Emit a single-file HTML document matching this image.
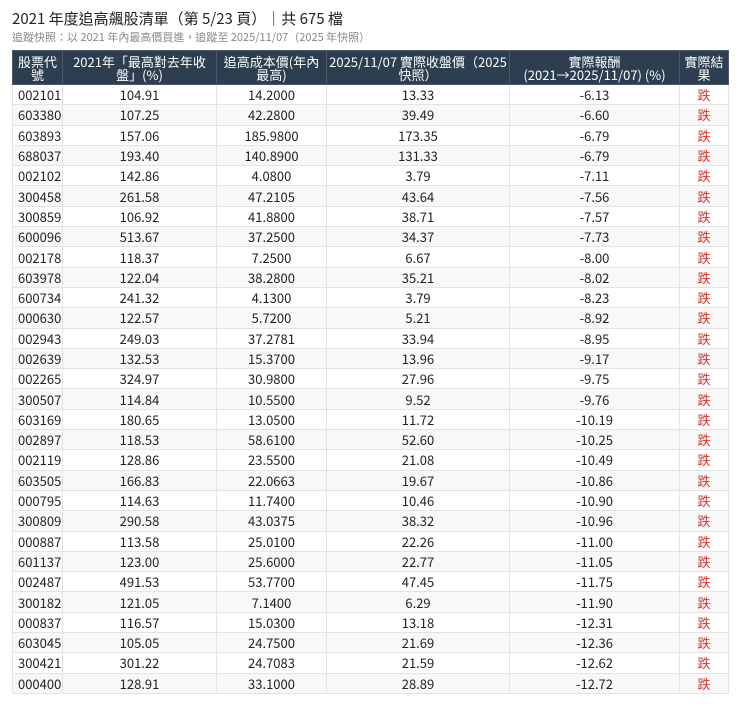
<!DOCTYPE html>
<html><head><meta charset="utf-8"><style>
body{margin:0;background:#fff;font-family:"Liberation Sans","Noto Sans CJK TC",sans-serif;color:#222;}
.t{position:absolute;left:12px;top:8px;font-size:15px;color:#222;font-family:"Noto Sans CJK TC",sans-serif;}
.s{position:absolute;left:12px;top:29px;font-size:11px;color:#888;font-family:"Noto Sans CJK TC",sans-serif;}
table{position:absolute;left:12px;top:50px;border-collapse:collapse;width:716px;table-layout:fixed;font-size:13px;font-family:"Noto Sans CJK TC",sans-serif;}
th{background:#2c3e50;color:#fff;font-weight:normal;line-height:13px;height:33px;padding:0 6px;border:1px solid #4a5a6a;font-size:13px;}
td{height:19.3px;padding:0;border:1px solid #e3e3e3;text-align:center;line-height:19px;}
tr:nth-child(even) td{background:#f8f8f8;}
td:first-child{text-align:left;padding-left:5px;}
td.r{color:#d9342b;}
</style></head><body>
<div class="t">2021 年度追高飆股清單（第 5/23 頁）｜共 675 檔</div>
<div class="s">追蹤快照：以 2021 年內最高價買進，追蹤至 2025/11/07（2025 年快照）</div>
<table>
<colgroup><col style="width:50px"><col style="width:154px"><col style="width:110px"><col style="width:183px"><col style="width:170px"><col style="width:49px"></colgroup>
<thead><tr><th style="padding:0 3px">股票代號</th><th style="padding:0 10px">2021年「最高對去年收盤」(%)</th><th style="padding:0 1px">追高成本價(年內最高)</th><th style="padding:0 1px">2025/11/07 實際收盤價（2025快照）</th><th>實際報酬<br>(2021→2025/11/07) (%)</th><th style="padding:0 3px">實際結果</th></tr></thead>
<tbody>
<tr><td>002101</td><td>104.91</td><td>14.2000</td><td>13.33</td><td>-6.13</td><td class="r">跌</td></tr>
<tr><td>603380</td><td>107.25</td><td>42.2800</td><td>39.49</td><td>-6.60</td><td class="r">跌</td></tr>
<tr><td>603893</td><td>157.06</td><td>185.9800</td><td>173.35</td><td>-6.79</td><td class="r">跌</td></tr>
<tr><td>688037</td><td>193.40</td><td>140.8900</td><td>131.33</td><td>-6.79</td><td class="r">跌</td></tr>
<tr><td>002102</td><td>142.86</td><td>4.0800</td><td>3.79</td><td>-7.11</td><td class="r">跌</td></tr>
<tr><td>300458</td><td>261.58</td><td>47.2105</td><td>43.64</td><td>-7.56</td><td class="r">跌</td></tr>
<tr><td>300859</td><td>106.92</td><td>41.8800</td><td>38.71</td><td>-7.57</td><td class="r">跌</td></tr>
<tr><td>600096</td><td>513.67</td><td>37.2500</td><td>34.37</td><td>-7.73</td><td class="r">跌</td></tr>
<tr><td>002178</td><td>118.37</td><td>7.2500</td><td>6.67</td><td>-8.00</td><td class="r">跌</td></tr>
<tr><td>603978</td><td>122.04</td><td>38.2800</td><td>35.21</td><td>-8.02</td><td class="r">跌</td></tr>
<tr><td>600734</td><td>241.32</td><td>4.1300</td><td>3.79</td><td>-8.23</td><td class="r">跌</td></tr>
<tr><td>000630</td><td>122.57</td><td>5.7200</td><td>5.21</td><td>-8.92</td><td class="r">跌</td></tr>
<tr><td>002943</td><td>249.03</td><td>37.2781</td><td>33.94</td><td>-8.95</td><td class="r">跌</td></tr>
<tr><td>002639</td><td>132.53</td><td>15.3700</td><td>13.96</td><td>-9.17</td><td class="r">跌</td></tr>
<tr><td>002265</td><td>324.97</td><td>30.9800</td><td>27.96</td><td>-9.75</td><td class="r">跌</td></tr>
<tr><td>300507</td><td>114.84</td><td>10.5500</td><td>9.52</td><td>-9.76</td><td class="r">跌</td></tr>
<tr><td>603169</td><td>180.65</td><td>13.0500</td><td>11.72</td><td>-10.19</td><td class="r">跌</td></tr>
<tr><td>002897</td><td>118.53</td><td>58.6100</td><td>52.60</td><td>-10.25</td><td class="r">跌</td></tr>
<tr><td>002119</td><td>128.86</td><td>23.5500</td><td>21.08</td><td>-10.49</td><td class="r">跌</td></tr>
<tr><td>603505</td><td>166.83</td><td>22.0663</td><td>19.67</td><td>-10.86</td><td class="r">跌</td></tr>
<tr><td>000795</td><td>114.63</td><td>11.7400</td><td>10.46</td><td>-10.90</td><td class="r">跌</td></tr>
<tr><td>300809</td><td>290.58</td><td>43.0375</td><td>38.32</td><td>-10.96</td><td class="r">跌</td></tr>
<tr><td>000887</td><td>113.58</td><td>25.0100</td><td>22.26</td><td>-11.00</td><td class="r">跌</td></tr>
<tr><td>601137</td><td>123.00</td><td>25.6000</td><td>22.77</td><td>-11.05</td><td class="r">跌</td></tr>
<tr><td>002487</td><td>491.53</td><td>53.7700</td><td>47.45</td><td>-11.75</td><td class="r">跌</td></tr>
<tr><td>300182</td><td>121.05</td><td>7.1400</td><td>6.29</td><td>-11.90</td><td class="r">跌</td></tr>
<tr><td>000837</td><td>116.57</td><td>15.0300</td><td>13.18</td><td>-12.31</td><td class="r">跌</td></tr>
<tr><td>603045</td><td>105.05</td><td>24.7500</td><td>21.69</td><td>-12.36</td><td class="r">跌</td></tr>
<tr><td>300421</td><td>301.22</td><td>24.7083</td><td>21.59</td><td>-12.62</td><td class="r">跌</td></tr>
<tr><td>000400</td><td>128.91</td><td>33.1000</td><td>28.89</td><td>-12.72</td><td class="r">跌</td></tr>
</tbody></table>
</body></html>
